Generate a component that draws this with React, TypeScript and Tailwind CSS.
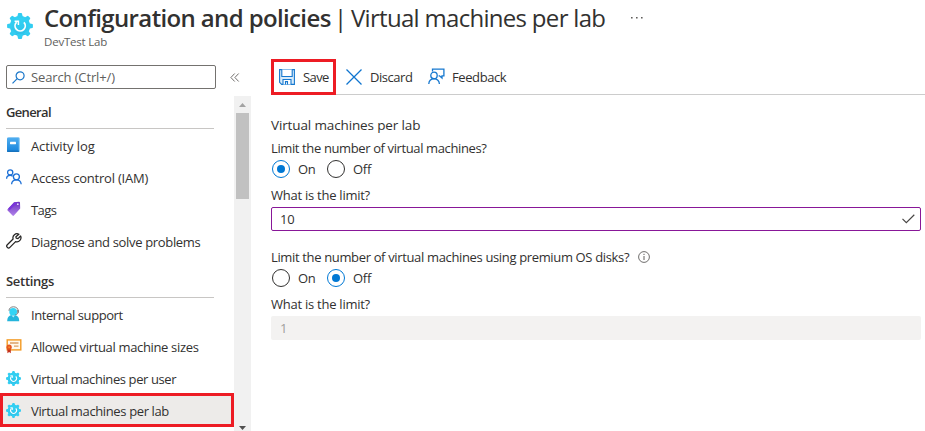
import type { ReactNode } from "react";

function Gear({ size }: { size: number }) {
  const teeth = [0, 45, 90, 135, 180, 225, 270, 315];
  return (
    <svg width={size} height={size} viewBox="0 0 26 26" className="shrink-0">
      <defs>
        <linearGradient id="gear" x1="0" y1="0" x2="0" y2="1">
          <stop offset="0" stopColor="#32d4f5" />
          <stop offset="1" stopColor="#2fc0e8" />
        </linearGradient>
      </defs>
      <circle cx="13" cy="13" r="10.2" fill="url(#gear)" />
      {teeth.map((a) => (
        <path key={a} d="M9.9 5 11 0.7Q11.1 0.1 11.7 0.1H14.3Q14.9 0.1 15 0.7L16.1 5Z" fill="#32cdf1" transform={`rotate(${a} 13 13)`} />
      ))}
      <path d="M9.6 9.2A5.1 5.1 0 1 0 16.9 9.4" fill="none" stroke="#fff" strokeWidth="1.8" />
      <path d="M7.6 8.2H11.4V12" fill="none" stroke="#fff" strokeWidth="1.5" />
    </svg>
  );
}

const Book = () => (
  <svg width="15" height="16" viewBox="0 0 15 16">
    <defs>
      <linearGradient id="book" x1="0" y1="0" x2="0" y2="1">
        <stop offset="0" stopColor="#50aef0" />
        <stop offset="1" stopColor="#1583db" />
      </linearGradient>
    </defs>
    <rect x="2" y="0.5" width="12" height="14.5" rx="1" fill="#9ad0f5" />
    <path d="M2 .5H12.8V15H2Q1 15 1 14V1.5Q1 .5 2 .5Z" fill="url(#book)" />
    <path d="M1 13.6H12.8V15H2Q1 15 1 14Z" fill="#1672bd" />
    <rect x="4" y="4.8" width="6" height="2.4" rx=".4" fill="#fff" />
  </svg>
);

const People = () => (
  <svg width="16" height="16" viewBox="0 0 16 16" fill="none" stroke="#1b6fd6" strokeWidth="1.3">
    <circle cx="4.2" cy="3.4" r="2.6" />
    <path d="M.6 9.8C.6 7.5 2 6.3 4.2 6.3 5.2 6.3 6 6.6 6.7 7.2" />
    <circle cx="10.4" cy="7.8" r="3" />
    <path d="M5.6 15.2C5.8 12.5 7.8 10.9 10.4 10.9S14.9 12.5 15.2 15.2" />
  </svg>
);

const Tag = () => (
  <svg width="16" height="16" viewBox="0 0 16 16">
    <defs>
      <linearGradient id="tag" x1="0" y1="0" x2="0" y2="1">
        <stop offset="0" stopColor="#6b2fc0" />
        <stop offset="1" stopColor="#b184ea" />
      </linearGradient>
    </defs>
    <path d="M8 1.2 13 .8Q14 .8 14 1.8L14.2 7.6 7.9 14.6Q7.2 15.2 6.5 14.5L1.6 9.6Q1 8.8 1.6 8.2Z" fill="url(#tag)" />
    <path d="M2.2 7.4 8.3 1.6 11.4 1.4 3.6 9.2Z" fill="#7a35db" />
    <circle cx="11.8" cy="3.2" r=".9" fill="#eadcff" />
  </svg>
);

const Wrench = () => (
  <svg width="16" height="16" viewBox="0 0 16 16" fill="none" stroke="#252423" strokeWidth="1.25" strokeLinejoin="round">
    <path d="M12.9 1.2A4.1 4.1 0 0 0 7.1 6L1.3 11.8A1.75 1.75 0 0 0 3.9 14.4L9.6 8.6A4.1 4.1 0 0 0 14.6 3L12 5.6 10.2 5.2 9.9 3.8Z" />
  </svg>
);

const Support = () => (
  <svg width="16" height="16" viewBox="0 0 16 16">
    <path d="M1.2 15.3C1.2 10.8 3.4 9.1 7.2 9.1S13.2 10.8 13.2 15.3Z" fill="#24b5dc" />
    <circle cx="7.2" cy="5.8" r="3.9" fill="#32d4f5" />
    <path d="M5.6 9.4H8.9L7.3 11.6Z" fill="#b9edf9" />
    <path d="M3 4.8C3 2.2 5 .8 7.5 .8S12.2 2.2 12.2 5.2C12.2 7.4 11.5 8.4 9.5 8.5" fill="none" stroke="#6f7173" strokeWidth=".9" />
    <path d="M12 4.1V6.7" stroke="#6f7173" strokeWidth="1.3" />
  </svg>
);

const Certificate = () => (
  <svg width="16" height="16" viewBox="0 0 16 16">
    <rect x="1.2" y="1.9" width="13.6" height="10" fill="#fff8ed" stroke="#f39a22" strokeWidth="1.4" />
    <path d="M4 5H12.5M8 8.2H12.5" stroke="#dba067" strokeWidth="1.3" />
    <path d="M1.4 10.5V15.2L3.1 14 4.8 15.2V10.5Z" fill="#c4311b" />
    <circle cx="3.1" cy="9.2" r="2.6" fill="#e4561f" />
    <circle cx="3.1" cy="9.2" r="1" fill="#f78c2a" />
  </svg>
);

function Item({ icon, selected, children, track }: { icon: ReactNode; selected?: boolean; children: ReactNode; track: string }) {
  return (
    <div className={`flex h-8 items-center ${selected ? "-my-px h-[34px] border-[3px] border-[#ed1c24] bg-[#edebe9] pl-[3px]" : "pl-[6px]"}`}>
      <span className="flex w-[25px] shrink-0">{icon}</span>
      <span className={`whitespace-nowrap pt-px ${track}`}>{children}</span>
    </div>
  );
}

function Radio({ on, children }: { on?: boolean; children: ReactNode }) {
  return (
    <div className="flex w-[55px] items-center">
      <span className={`ml-px mr-2 flex size-[18px] shrink-0 items-center justify-center rounded-full border ${on ? "border-[#0078d4]" : "border-[#323130]"}`}>
        {on && <span className="size-2 rounded-full bg-[#0078d4]" />}
      </span>
      <span>{children}</span>
    </div>
  );
}

export default function App() {
  return (
    <div className="flex h-[431px] w-[925px] flex-col overflow-hidden bg-white font-['Open_Sans','Noto_Sans',sans-serif] text-[13px] leading-[18px] text-[#323130]">
      <header className="flex h-[56px] shrink-0 pl-[7px]">
        <div className="w-[37px] shrink-0 pt-[13px]"><Gear size={26} /></div>
        <div>
          <h1 className="flex h-[35px] items-center whitespace-nowrap text-[24px] leading-9">
            <span className="w-[290px] font-semibold tracking-[-0.63px]">Configuration and policies</span>
            <span className="w-[17px]">|</span>
            <span className="w-[280px] tracking-[-0.7px]">Virtual machines per lab</span>
            <svg width="14" height="4" viewBox="0 0 14 4" fill="#605e5c">
              <path d="M0 1H1.6V2.6H0ZM5 1H6.6V2.6H5ZM10 1H11.6V2.6H10Z" />
            </svg>
          </h1>
          <p className="text-[11.5px] leading-[13px] tracking-[-0.2px] text-[#605e5c]">DevTest Lab</p>
        </div>
      </header>
      <div className="flex min-h-0 flex-1">
        <aside className="flex w-[251px] shrink-0 flex-col">
          <div className="flex h-10 shrink-0 pl-[6px] pt-[9px]">
            <div className="flex h-6 w-[210px] items-center rounded-[2px] border border-[#74726f] pl-[5px]">
              <svg width="13" height="13" viewBox="0 0 13 13" fill="none" stroke="#1976c9" strokeWidth="1.2">
                <circle cx="8.1" cy="4.8" r="4" /><path d="M5.2 7.7.5 12.4" />
              </svg>
              <span className="ml-[6px] tracking-[-0.13px] text-[#605e5c]">Search (Ctrl+/)</span>
            </div>
            <svg className="ml-[14px] mt-[8px]" width="10" height="9" viewBox="0 0 10 9" fill="none" stroke="#706e6c">
              <path d="M4.7.5.9 4.5 4.7 8.5M8.7.5 4.9 4.5 8.7 8.5" />
            </svg>
          </div>
          <div className="flex min-h-0 flex-1">
            <nav className="w-[234px] shrink-0">
              <h2 className="ml-[6px] mr-5 h-[33px] border-b border-[#c8c6c4] pt-[7px] font-semibold tracking-[-0.65px]">General</h2>
              <div>
                <Item icon={<Book />} track="tracking-[-0.1px]">Activity log</Item>
                <Item icon={<People />} track="tracking-[-0.22px]">Access control (IAM)</Item>
                <Item icon={<Tag />} track="tracking-[-0.6px]">Tags</Item>
                <Item icon={<Wrench />} track="tracking-[-0.34px]">Diagnose and solve problems</Item>
              </div>
              <h2 className="ml-[6px] mr-5 h-[41px] border-b border-[#c8c6c4] pt-[15px] font-semibold tracking-[-0.3px]">Settings</h2>
              <div>
                <Item icon={<Support />} track="tracking-[-0.43px]">Internal support</Item>
                <Item icon={<Certificate />} track="tracking-[-0.34px]">Allowed virtual machine sizes</Item>
                <Item icon={<Gear size={15} />} track="tracking-[-0.4px]">Virtual machines per user</Item>
                <Item icon={<Gear size={15} />} track="tracking-[-0.37px]" selected>Virtual machines per lab</Item>
              </div>
            </nav>
            <div className="flex w-[17px] flex-col items-center bg-[#f1f1f1]">
              <svg width="17" height="17" viewBox="0 0 17 17" className="shrink-0"><path d="M5 11H12L8.5 7Z" fill="#a3a3a3" /></svg>
              <div className="h-[86px] w-[13px] shrink-0 bg-[#c1c1c1]" />
              <svg width="17" height="6" viewBox="0 0 17 6" className="mt-auto shrink-0"><path d="M5 1H12L8.5 5Z" fill="#505050" /></svg>
            </div>
          </div>
        </aside>
        <main className="flex flex-1 flex-col pl-5 pt-[3px]">
          <div className="flex h-9 shrink-0">
            <button className="flex w-[65px] items-center border-[3px] border-[#ed1c24] pl-[5px]">
              <svg width="16" height="16" viewBox="0 0 16 16" fill="none" stroke="#1678cf" strokeWidth="1.1">
                <path d="M.6.6H15.4V15.4H2.7L.6 13.3Z" fill="#d8ebfa" />
                <path d="M2.8.6V7.5H13.2V.6M4 15.4V10.5H12V15.4M6.5 15.4V12.6H8.5V15.4" fill="#fff" />
              </svg>
              <span className="ml-2 tracking-[-0.6px]">Save</span>
            </button>
            <div className="flex flex-1 items-center border-b border-[#cccccc] pl-[10px]">
              <svg width="16" height="16" viewBox="0 0 16 16" fill="none" stroke="#0f75cf" strokeWidth="1.3"><path d="M.5.5 15.5 15.5M15.5.5.5 15.5" /></svg>
              <span className="ml-2 w-[58px] tracking-[-0.45px]">Discard</span>
              <svg width="17" height="17" viewBox="0 0 17 17" fill="none" stroke="#1678cf" strokeWidth="1.3">
                <path d="M4.5 3.5V1.2H15.9V7.8H14V10L11.5 7.8H10.6" />
                <circle cx="6" cy="7.4" r="3.2" />
                <path d="M.8 16C.9 12.8 3 10.8 6 10.8S11.2 12.8 11.4 16" />
              </svg>
              <span className="ml-[7px] tracking-[-0.4px]">Feedback</span>
            </div>
          </div>
          <section className="w-[650px] pt-[21px] tracking-[-0.25px]">
            <p className="text-[13.5px] tracking-[-0.13px]">Virtual machines per lab</p>
            <p className="mt-[5px] tracking-[-0.38px]">Limit the number of virtual machines?</p>
            <div className="mt-[3px] flex h-[18px]"><Radio on>On</Radio><Radio>Off</Radio></div>
            <p className="mt-2">What is the limit?</p>
            <div className="mt-[3px] flex h-6 items-center justify-between rounded-[2px] border border-[#881798] pl-2 pr-[5px]">
              <span>10</span>
              <svg width="13" height="10" viewBox="0 0 13 10" fill="none" stroke="#484644" strokeWidth="1.2"><path d="M.5 4.8 4.3 8.6 12.3.8" /></svg>
            </div>
            <div className="mt-[17px] flex items-center">
              <span className="w-[367px] whitespace-nowrap tracking-[-0.35px]">Limit the number of virtual machines using premium OS disks?</span>
              <svg width="12" height="12" viewBox="0 0 12 12" fill="none" stroke="#605e5c"><circle cx="6" cy="6" r="5.4" strokeWidth=".9" /><path d="M6 5V9M6 2.8V4" /></svg>
            </div>
            <div className="mt-[3px] flex h-[18px]"><Radio>On</Radio><Radio on>Off</Radio></div>
            <p className="mt-2">What is the limit?</p>
            <div className="mt-[3px] flex h-6 items-center rounded-[2px] bg-[#f3f2f1] pl-[9px] text-[#a19f9d]">1</div>
          </section>
        </main>
      </div>
    </div>
  );
}
